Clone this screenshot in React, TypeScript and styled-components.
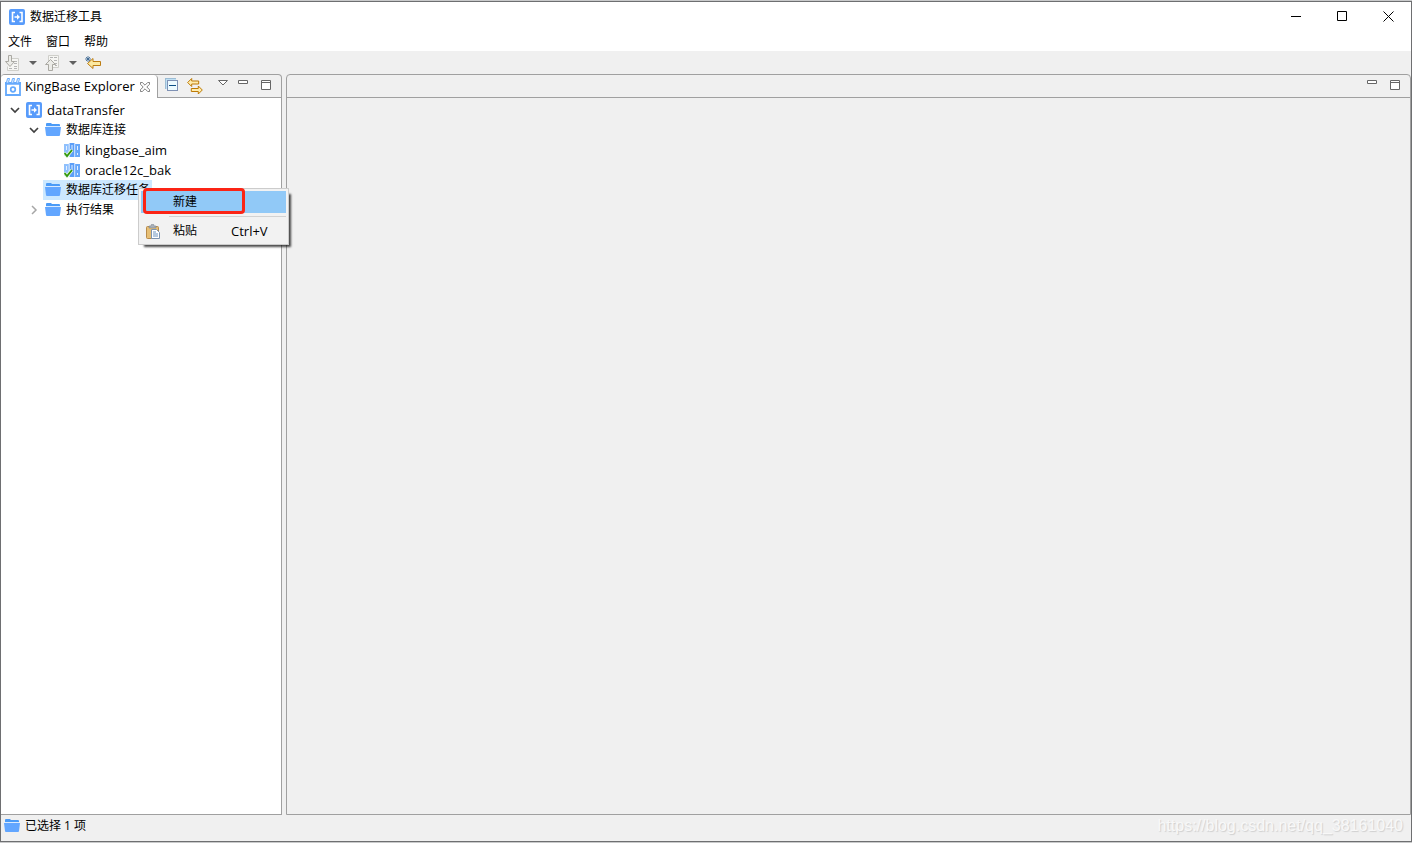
import React from "react";
import styled, { createGlobalStyle } from "styled-components";

const GlobalStyle = createGlobalStyle`
  * { box-sizing: border-box; }
  body { margin: 0; padding: 1px 0; background: #c9cacb; }
  body, button { font: 12px/20px "Open Sans", "Noto Sans CJK SC", sans-serif; color: #000; }
  button { border: 0; padding: 0; margin: 0; background: none; }
  svg { display: block; flex: none; }
  ul { list-style: none; margin: 0; padding: 0; }
`;

const Window = styled.div`
  position: relative;
  display: flex;
  flex-direction: column;
  min-height: calc(100vh - 2px);
  background: #f0f0f0;
  border: 1px solid #6e6f71;
`;
const TitleBar = styled.header`
  display: flex;
  align-items: center;
  height: 29px;
  padding-left: 8px;
  gap: 5px;
  background: #fff;
`;
const Title = styled.h1`
  flex: 1;
  margin: 0;
  font-size: 12px;
  font-weight: 400;
`;
const WindowButton = styled.button`
  display: grid;
  place-items: center;
  width: 46px;
  height: 28px;
`;
const MenuBar = styled.nav`
  display: flex;
  align-items: flex-end;
  gap: 14px;
  height: 20px;
  padding-left: 7px;
  background: #fff;
  button { height: 19px; }
`;
const ToolBar = styled.div`
  display: flex;
  align-items: center;
  gap: 8px;
  height: 23px;
  padding-left: 4px;
`;
const Workbench = styled.main`
  display: flex;
  flex: 1;
  gap: 4px;
`;
const Panel = styled.section<{ $width?: number }>`
  display: flex;
  flex-direction: column;
  flex: ${(p) => (p.$width ? `0 0 ${p.$width}px` : "1")};
  min-width: 0;
  border: 1px solid #a0a0a0;
  border-left-width: ${(p) => (p.$width ? 0 : 1)}px;
  border-radius: 4px 4px 0 0;
`;
const PanelHeader = styled.div`
  display: flex;
  height: 23px;
  justify-content: flex-end;
  border-bottom: 1px solid #a0a0a0;
`;
const Tab = styled.div`
  display: flex;
  align-items: center;
  justify-content: space-between;
  width: 157px;
  height: 23px;
  padding: 0 7px 0 4px;
  background: #fff;
  border-right: 1px solid #a0a0a0;
  border-radius: 4px 4px 0 0;
`;
const TabTitle = styled.div`
  display: flex;
  align-items: center;
  gap: 4px;
`;
const Latin = styled.span`
  flex: none;
  font-size: 13px;
  line-height: 18px;
  padding-bottom: 1px;
  white-space: nowrap;
`;
const PanelTools = styled.div`
  display: flex;
  flex: 1;
  align-items: center;
  justify-content: space-between;
  height: 23px;
  padding: 0 10px 0 7px;
`;
const ToolGroup = styled.div<{ $gap: number }>`
  display: flex;
  align-items: flex-start;
  gap: ${(p) => p.$gap}px;
`;
const ViewTools = styled(ToolGroup)`
  align-self: flex-start;
  padding-top: 5px;
`;
const RightTools = styled(ViewTools)`
  padding-right: 10px;
`;
const ViewMenuButton = styled.button`
  margin-right: -3px;
`;
const TreeArea = styled.div`
  flex: 1;
  padding: 2px 0 0 7px;
  background: #fff;
`;
const TreeRow = styled.li<{ $level: number }>`
  display: flex;
  align-items: center;
  height: 20px;
  padding-left: ${(p) => p.$level * 19}px;
`;
const Toggle = styled.button`
  display: grid;
  place-items: center;
  width: 14px;
  height: 20px;
`;
const TreeLabel = styled.span<{ $selected?: boolean }>`
  display: flex;
  align-items: center;
  gap: 5px;
  height: 20px;
  margin-left: 2px;
  padding: 0 2px;
  white-space: nowrap;
  background: ${(p) => (p.$selected ? "#cce8ff" : "transparent")};
`;
const StatusBar = styled.footer`
  display: flex;
  align-items: center;
  justify-content: space-between;
  gap: 5px;
  height: 26px;
  padding: 0 8px 4px 3px;
`;
const StatusText = styled.span`
  flex: 1;
`;
const Watermark = styled.span`
  font: 16px/20px "Liberation Sans", sans-serif;
  color: #f8f8f8;
  text-shadow: 1px 1px 1px #cfcfcf;
`;
const ContextMenu = styled.div`
  position: absolute;
  left: 137px;
  top: 186px;
  width: 151px;
  padding: 2px;
  background: #f2f2f2;
  border: 1px solid #ccc;
  box-shadow: 4px 4px 2px -2px rgba(0, 0, 0, 0.7);
`;
const MenuItem = styled.button<{ $active?: boolean }>`
  display: flex;
  align-items: center;
  width: 100%;
  height: 22px;
  text-align: left;
  background: ${(p) => (p.$active ? "#91c9f7" : "transparent")};
`;
const MenuIcon = styled.span`
  width: 32px;
  padding-left: 5px;
`;
const MenuLabel = styled.span`
  width: 58px;
`;
const Separator = styled.hr`
  height: 1px;
  margin: 3px 0 3px 28px;
  border: 0;
  background: #d2d2d2;
`;
const Callout = styled.div`
  position: absolute;
  left: 4px;
  top: -1px;
  width: 102px;
  height: 26px;
  border: 3px solid #fb2415;
  border-radius: 4px;
  pointer-events: none;
`;

const AppIcon = () => (
  <svg width="16" height="16" viewBox="0 0 16 16">
    <rect width="16" height="16" rx="2" fill="#579bfb" />
    <path d="M6 3.500H3.500v9H6M10.500 3.500H13v9h-2.500" fill="none" stroke="#fff" strokeWidth="1.600" />
    <path d="M5.500 7.300H8V5.200L11 8l-3 2.800V8.700H5.500z" fill="#fff" />
  </svg>
);
const FolderIcon = () => (
  <svg width="16" height="14" viewBox="0 0 16 14">
    <path d="M1 1q0-1 1-1h4l1 1h7q1 0 1 1v2H1z" fill="#4b9bf7" />
    <path d="M0 4h16l-1 8q0 1-1 1H2q-1 0-1-1z" fill="#62a6ff" />
    <path d="M1 3h14v1H1z" fill="#d9eaff" />
  </svg>
);
const ServerIcon = () => (
  <svg width="16" height="16" viewBox="0 0 16 16">
    <path d="M0 2h5v12H0z" fill="#8fc0fd" />
    <path d="M5.500 1h5v14h-5z" fill="#5c9ff8" />
    <path d="M11 2h5v13h-5z" fill="#68a8fa" />
    <path d="M2 4h1v4H2zM7.500 3h1v6h-1zM13 4h1v4h-1zM13 11h1v2h-1z" fill="#e4f0ff" />
    <path d="M5 1.500v13M10.800 1.500v13" stroke="#d4e6ff" strokeWidth=".7" />
    <path d="M0 11l3 3 5-6" fill="none" stroke="#e6f5e6" strokeWidth="3.500" />
    <path d="M.5 11l2.500 3 5-6" fill="none" stroke="#32980c" strokeWidth="1.800" />
  </svg>
);
const ExplorerIcon = () => (
  <svg width="16" height="18" viewBox="0 0 16 18">
    <path d="M1 5.500h14V17H1z" fill="#fff" stroke="#64a9fc" strokeWidth="1.800" />
    <path d="M0 4h16v2.500H0z" fill="#64a9fc" />
    <path d="M1.500 4.500l1-4h2l-1 4M6.500 4.500l1-4h2l-1 4M11.500 4.500l1-4h2l-1 4" fill="#e9f3ff" stroke="#64a9fc" />
    <circle cx="8" cy="11.500" r="2.300" fill="#fff" stroke="#64a9fc" strokeWidth="1.700" />
  </svg>
);
const TransferIcon = ({ up }: { up?: boolean }) => (
  <svg width="16" height="16" viewBox="0 0 16 16">
    <path d={up ? "M3.500.5h10v12h-10z" : "M4.500 3.500h9v12h-11v-4"} fill="#f6f6f3" stroke="#cfcfca" />
    <path
      d={up ? "M5 2.500h3M9 2.500h3M9 5.500h3M10 8.500h2M10 10.500h2" : "M9 6.500h3M9 8.500h3M4 13.500h3M9 11.500h3M9 13.500h3"}
      stroke="#b5b5b5" fill="none"
    />
    {up
      ? <path d="M5.500 4.500l5 5h-3v6h-4v-6h-3z" fill="#ecece8" stroke="#aaa9a3" />
      : <path d="M3.500 .5h3v6h3l-4.500 5-4.500-5h3z" fill="#ecece8" stroke="#aaa9a3" />}
  </svg>
);
const DropArrow = () => (
  <svg width="8" height="4" viewBox="0 0 8 4"><path d="M0 0h8L4 4z" fill="#606060" /></svg>
);
const BackIcon = () => (
  <svg width="17" height="14" viewBox="0 0 17 14">
    <path d="M2.500 7.500l5.500-5v3h7.500v4H8v3z" fill="#fce9a1" stroke="#bc7c12" />
    <path d="M3 0v6M0 3h6M1 1l4 4M5 1L1 5" stroke="#34618e" strokeWidth=".8" />
  </svg>
);
const CloseTabIcon = () => (
  <svg width="10" height="10" viewBox="0 0 11 11">
    <path d="M.5.5h2l3 3 3-3h2v2l-3 3 3 3v2h-2l-3-3-3 3h-2v-2l3-3-3-3z" fill="#fff" stroke="#666" strokeWidth=".9" />
  </svg>
);
const CollapseIcon = () => (
  <svg width="14" height="14" viewBox="0 0 14 14" shapeRendering="crispEdges">
    <path d="M.5 10.500V.5h10" fill="none" stroke="#9cbcd4" />
    <path d="M1 1h10v10H1z" fill="#bfe0f4" />
    <path d="M2.500 2.500h10v10h-10z" fill="#edfaff" stroke="#7f91b4" />
    <path d="M4 7.500h7" stroke="#0c4e85" />
  </svg>
);
const LinkIcon = () => (
  <svg width="16" height="17" viewBox="0 0 16 17">
    <path d="M.7 4.500l4-4v2.500h7v3h-7v2.500zM15.300 12l-4-4v2.500h-7v3h7V16z" fill="#ffedaf" stroke="#bd7904" />
  </svg>
);
const ViewMenuIcon = () => (
  <svg width="10" height="6" viewBox="0 0 10 6"><path d="M.5.5h9L5 5z" fill="#fff" stroke="#666" /></svg>
);
const MinimizeIcon = () => (
  <svg width="10" height="4" viewBox="0 0 10 4"><path d="M.5.5h9v3h-9z" fill="#fff" stroke="#666" /></svg>
);
const MaximizeIcon = () => (
  <svg width="10" height="10" viewBox="0 0 10 10"><path d="M.5.5h9v9h-9zM.5 2.500h9" fill="#fff" stroke="#666" /></svg>
);
const PasteIcon = () => (
  <svg width="14" height="15" viewBox="0 0 14 15">
    <rect x=".5" y="2.500" width="12" height="12" rx="1" fill="#e7bf75" stroke="#b88b4a" />
    <path d="M3 4V2h2q0-2 1.500-2T8 2h2v2z" fill="#a9b1ba" stroke="#7d858e" strokeWidth=".6" />
    <path d="M5.500 5.500h5l3 3v6h-8z" fill="#fff" stroke="#7d94b0" />
    <path d="M7 8h3M7 10h5M7 12h5" stroke="#6c93bd" />
  </svg>
);
const Chevron = ({ open }: { open: boolean }) => (
  <svg width="10" height="10" viewBox="0 0 10 10">
    <path d={open ? "M1 3l4 4 4-4" : "M3 1l4 4-4 4"} fill="none" stroke={open ? "#404040" : "#a6a6a6"} strokeWidth={open ? 1.700 : 1.500} />
  </svg>
);
const CaptionGlyph = ({ d }: { d: string }) => (
  <svg width="11" height="11" viewBox="0 0 11 11"><path d={d} fill="none" stroke="#000" /></svg>
);

type Node = { label: string; level: number; icon: React.ReactNode; open?: boolean; selected?: boolean; latin?: boolean };
const nodes: Node[] = [
  { label: "dataTransfer", level: 0, icon: <AppIcon />, open: true, latin: true },
  { label: "数据库连接", level: 1, icon: <FolderIcon />, open: true },
  { label: "kingbase_aim", level: 2, icon: <ServerIcon />, latin: true },
  { label: "oracle12c_bak", level: 2, icon: <ServerIcon />, latin: true },
  { label: "数据库迁移任务", level: 1, icon: <FolderIcon />, selected: true },
  { label: "执行结果", level: 1, icon: <FolderIcon />, open: false },
];

const captions = [
  { name: "最小化", d: "M0 5.500h10" },
  { name: "最大化", d: "M.5.5h9v9h-9z" },
  { name: "关闭", d: "M.5.5l10 10M10.500.5l-10 10" },
];

export default function App() {
  return (
    <>
      <GlobalStyle />
      <Window>
        <TitleBar>
          <AppIcon />
          <Title>数据迁移工具</Title>
          <ToolGroup $gap={0}>
            {captions.map((c) => (
              <WindowButton key={c.name} aria-label={c.name}><CaptionGlyph d={c.d} /></WindowButton>
            ))}
          </ToolGroup>
        </TitleBar>
        <MenuBar>
          <button>文件</button>
          <button>窗口</button>
          <button>帮助</button>
        </MenuBar>
        <ToolBar>
          <button aria-label="导入"><TransferIcon /></button>
          <button aria-label="导入选项"><DropArrow /></button>
          <button aria-label="导出"><TransferIcon up /></button>
          <button aria-label="导出选项"><DropArrow /></button>
          <button aria-label="返回"><BackIcon /></button>
        </ToolBar>
        <Workbench>
          <Panel $width={281}>
            <PanelHeader>
              <Tab>
                <TabTitle>
                  <ExplorerIcon />
                  <Latin>KingBase Explorer</Latin>
                </TabTitle>
                <button aria-label="关闭视图"><CloseTabIcon /></button>
              </Tab>
              <PanelTools>
                <ToolGroup $gap={8}>
                  <button aria-label="全部折叠"><CollapseIcon /></button>
                  <button aria-label="链接"><LinkIcon /></button>
                </ToolGroup>
                <ViewTools $gap={13}>
                  <ViewMenuButton aria-label="视图菜单"><ViewMenuIcon /></ViewMenuButton>
                  <button aria-label="最小化视图"><MinimizeIcon /></button>
                  <button aria-label="最大化视图"><MaximizeIcon /></button>
                </ViewTools>
              </PanelTools>
            </PanelHeader>
            <TreeArea>
              <ul>
                {nodes.map((n) => (
                  <TreeRow key={n.label} $level={n.level}>
                    <Toggle aria-label={n.label} disabled={n.open === undefined}>
                      {n.open !== undefined && <Chevron open={n.open} />}
                    </Toggle>
                    <TreeLabel $selected={n.selected}>
                      {n.icon}
                      {n.latin ? <Latin>{n.label}</Latin> : n.label}
                    </TreeLabel>
                  </TreeRow>
                ))}
              </ul>
            </TreeArea>
          </Panel>
          <Panel>
            <PanelHeader>
              <RightTools $gap={13}>
                <button aria-label="最小化编辑区"><MinimizeIcon /></button>
                <button aria-label="最大化编辑区"><MaximizeIcon /></button>
              </RightTools>
            </PanelHeader>
          </Panel>
        </Workbench>
        <StatusBar>
          <FolderIcon />
          <StatusText>已选择 1 项</StatusText>
          <Watermark>https://blog.csdn.net/qq_38161040</Watermark>
        </StatusBar>
        <ContextMenu>
          <MenuItem $active>
            <MenuIcon />
            <MenuLabel>新建</MenuLabel>
          </MenuItem>
          <Separator />
          <MenuItem>
            <MenuIcon><PasteIcon /></MenuIcon>
            <MenuLabel>粘贴</MenuLabel>
            <Latin>Ctrl+V</Latin>
          </MenuItem>
          <Callout />
        </ContextMenu>
      </Window>
    </>
  );
}
